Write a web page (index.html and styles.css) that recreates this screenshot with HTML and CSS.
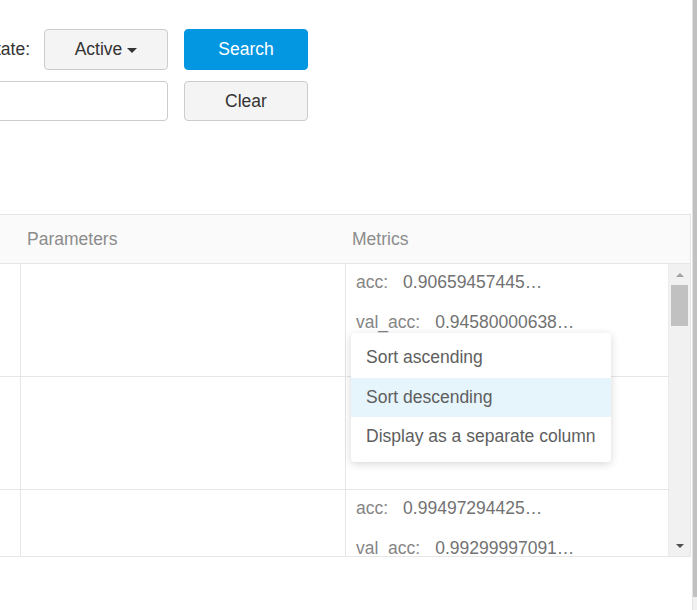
FILE: index.html
```html
<!DOCTYPE html>
<html lang="en">
<head>
<meta charset="utf-8">
<title>Runs</title>
<link rel="stylesheet" href="styles.css">
</head>
<body>
<div class="viewport">
  <div class="page">
    <div class="controls">
      <div class="filters">
        <div class="filter-row">
          <label class="lbl">State:</label>
          <button class="btn btn-default btn-tall">Active <span class="caret"></span></button>
        </div>
        <div class="filter-row">
          <label class="lbl">Filter Metrics:</label>
          <input class="txt" type="text">
        </div>
      </div>
      <div class="actions">
        <button class="btn btn-primary btn-tall">Search</button>
        <button class="btn btn-default">Clear</button>
      </div>
    </div>

    <div class="table">
      <div class="thead">
        <div class="th c0"></div>
        <div class="th c1">Parameters</div>
        <div class="th c2">Metrics</div>
      </div>
      <div class="tbody">
        <div class="rows">
          <div class="row">
            <div class="td c0"></div>
            <div class="td c1"></div>
            <div class="td c2 menu-anchor">
              <div class="metric"><span class="mk">acc:</span><span class="mv">0.9065945744514465</span></div>
              <div class="metric"><span class="mk">val_acc:</span><span class="mv">0.9458000063896179</span></div>
              <div class="menu">
                <div class="item">Sort ascending</div>
                <div class="item active">Sort descending</div>
                <div class="item">Display as a separate column</div>
              </div>
            </div>
          </div>
          <div class="row">
            <div class="td c0"></div>
            <div class="td c1"></div>
            <div class="td c2"></div>
          </div>
          <div class="row">
            <div class="td c0"></div>
            <div class="td c1"></div>
            <div class="td c2">
              <div class="metric"><span class="mk">acc:</span><span class="mv">0.9949729442596436</span></div>
              <div class="metric"><span class="mk">val_acc:</span><span class="mv">0.9929999709129333</span></div>
            </div>
          </div>
        </div>
        <div class="sb">
          <div class="sb-btn"><span class="arrow-up"></span></div>
          <div class="sb-track"><div class="sb-thumb"></div></div>
          <div class="sb-btn"><span class="arrow-down"></span></div>
        </div>
      </div>
    </div>
  </div>
  <div class="pagebar"><div class="pagethumb"></div></div>
</div>
</body>
</html>
```

FILE: styles.css
```css
html, body {
  margin: 0;
  padding: 0;
  background: #fff;
}
body {
  font-family: "Liberation Sans", Arial, sans-serif;
  font-size: 17.5px;
  color: #333;
  overflow: hidden;
}
.viewport {
  display: flex;
  width: 697px;
  height: 610px;
  overflow: hidden;
}
.page {
  width: 692px;
  flex-shrink: 0;
  overflow: hidden;
}
.pagebar {
  width: 4px;
  border-left: 1px solid #e2e2e2;
  background: #f1f1f1;
}
.pagethumb {
  height: 597px;
  background: #c1c1c1;
}

/* controls */
.controls {
  display: flex;
  margin-left: -300px;
  padding-top: 29px;
}
.filters {
  width: 468px;
  display: flex;
  flex-direction: column;
  gap: 11px;
}
.filter-row {
  display: flex;
  justify-content: flex-end;
  align-items: center;
  gap: 14px;
  white-space: nowrap;
}
.lbl {
  color: #333;
}
.actions {
  margin-left: 16px;
  display: flex;
  flex-direction: column;
  gap: 11px;
}
.btn {
  width: 124px;
  height: 40px;
  box-sizing: border-box;
  border-radius: 4px;
  font-family: inherit;
  font-size: 17.5px;
  padding: 0;
  display: flex;
  align-items: center;
  justify-content: center;
}
.btn-tall {
  height: 41px;
}
.btn-default {
  background: #f4f4f4;
  border: 1px solid #ccc;
  color: #333;
}
.btn-primary {
  background: #0497e1;
  border: 1px solid #0497e1;
  color: #fff;
}
.caret {
  display: inline-block;
  width: 0;
  height: 0;
  margin-left: 5px;
  margin-top: 2px;
  border-left: 5px solid transparent;
  border-right: 5px solid transparent;
  border-top: 5px solid #333;
}
.txt {
  width: 280px;
  height: 40px;
  box-sizing: border-box;
  border: 1px solid #ccc;
  border-radius: 4px;
  background: #fff;
  margin: 0;
}

/* table */
.table {
  width: 691px;
  margin-top: 93px;
}
.thead {
  display: flex;
  height: 48px;
  border-top: 1px solid #e6e6e6;
  border-bottom: 1px solid #e6e6e6;
  border-right: 1px solid #e6e6e6;
  background: #fafafa;
}
.th {
  display: flex;
  align-items: center;
  color: #8c8c8c;
  box-sizing: border-box;
}
.th.c0 { width: 21px; }
.th.c1 { width: 325px; padding-left: 6px; }
.th.c2 { flex: 1; padding-left: 6px; }

.tbody {
  display: flex;
  height: 292px;
  border-bottom: 1px solid #e6e6e6;
  border-right: 1px solid #e6e6e6;
}
.rows {
  width: 669px;
  overflow: hidden;
}
.row {
  display: flex;
  height: 112px;
  border-bottom: 1px solid #e6e6e6;
}
.td {
  box-sizing: border-box;
  height: 100%;
}
.td.c0 { width: 21px; border-right: 1px solid #e6e6e6; }
.td.c1 { width: 325px; border-right: 1px solid #e6e6e6; }
.td.c2 {
  width: 323px;
  padding: 8px 0 0 10px;
  border-right: 1px solid #ececec;
}
.menu-anchor {
  position: relative;
}
.metric {
  display: flex;
  gap: 15px;
  height: 20px;
  line-height: 20px;
  margin-bottom: 20px;
  color: #7a7a7a;
  white-space: nowrap;
}
.mk {
  color: #858585;
}
.mv {
  max-width: 144px;
  overflow: hidden;
  text-overflow: ellipsis;
  color: #727272;
}

/* dropdown menu overlay */
.menu {
  position: absolute;
  left: 5px;
  top: 69px;
  width: 260px;
  padding: 5px 0;
  background: #fff;
  border-radius: 4px;
  box-shadow: 0 2px 8px rgba(0, 0, 0, 0.16);
  z-index: 10;
}
.item {
  height: 39.5px;
  display: flex;
  align-items: center;
  padding-left: 15px;
  color: #5e5e5e;
  white-space: nowrap;
}
.item.active {
  background: #e6f4fc;
}

/* inner scrollbar */
.sb {
  width: 21px;
  background: #f1f1f1;
  display: flex;
  flex-direction: column;
}
.sb-btn {
  height: 21px;
  display: flex;
  align-items: center;
  justify-content: center;
}
.sb-track {
  flex: 1;
}
.sb-thumb {
  height: 41px;
  margin: 0 2px;
  background: #c1c1c1;
}
.arrow-up {
  width: 0;
  height: 0;
  border-left: 4.5px solid transparent;
  border-right: 4.5px solid transparent;
  border-bottom: 4.5px solid #a3a3a3;
}
.arrow-down {
  width: 0;
  height: 0;
  border-left: 4.5px solid transparent;
  border-right: 4.5px solid transparent;
  border-top: 4.5px solid #505050;
}
```
